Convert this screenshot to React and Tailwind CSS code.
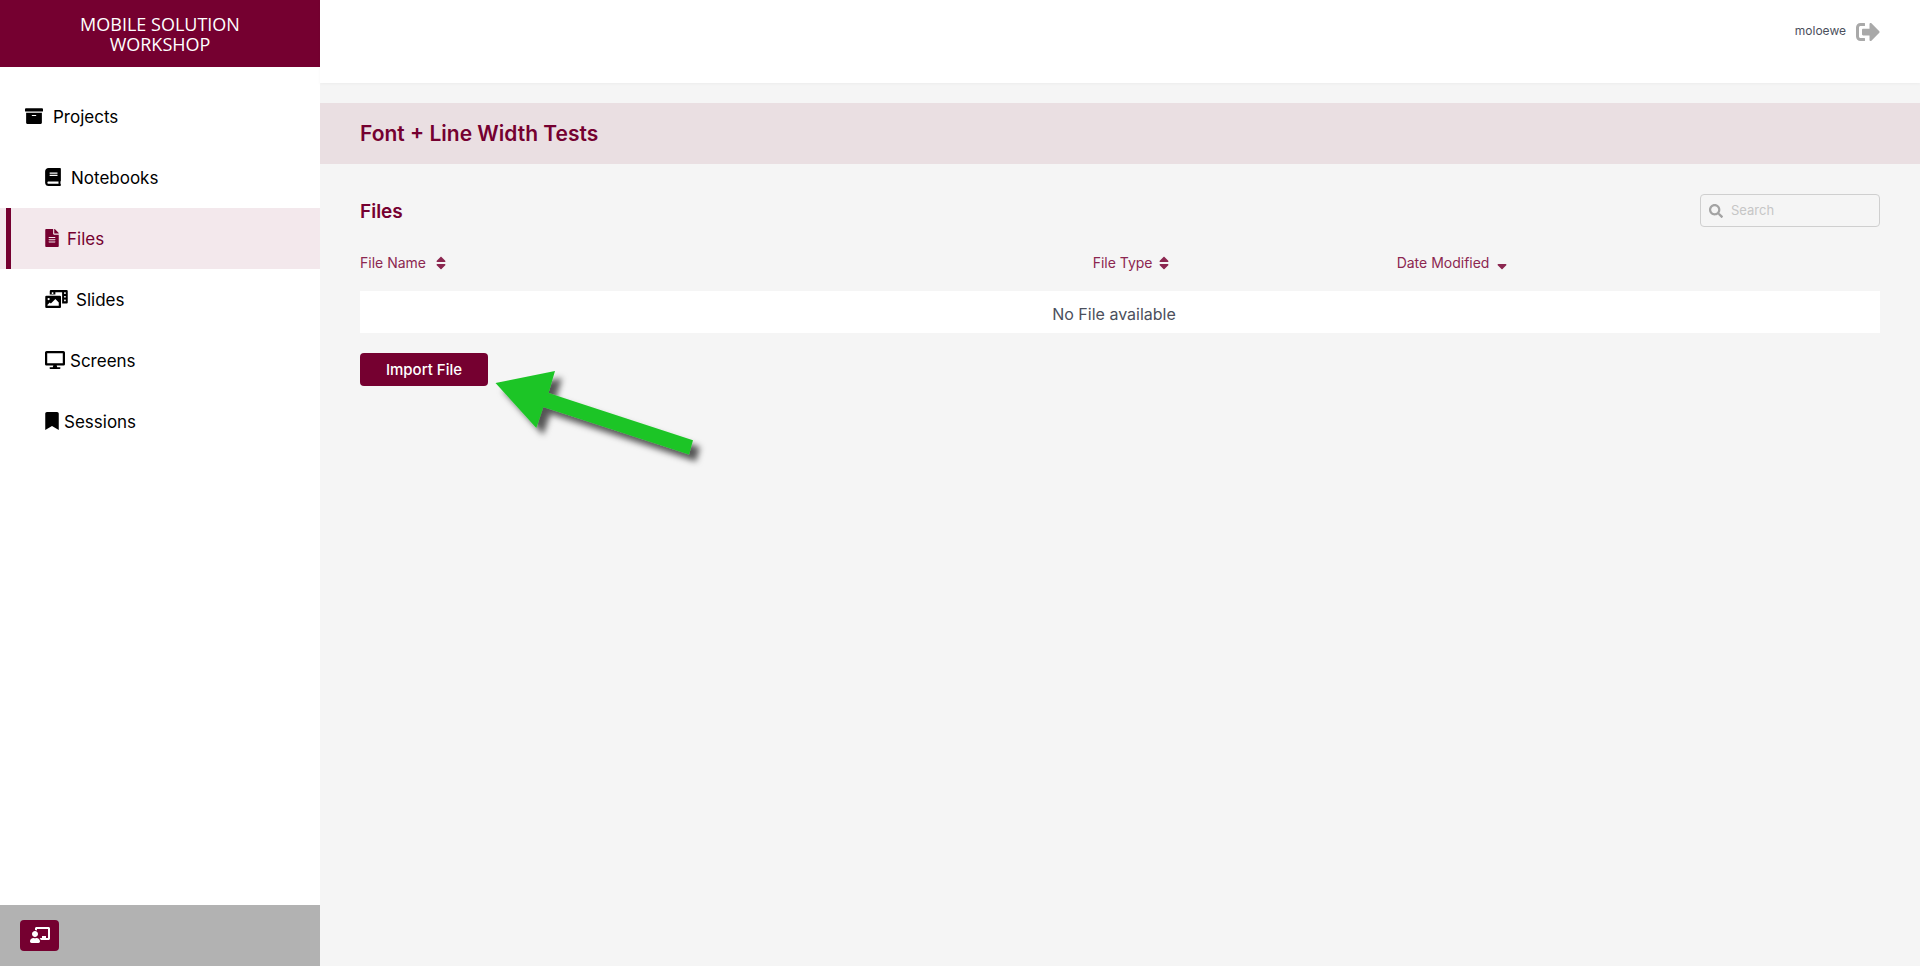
import {
  FaArchive,
  FaBook,
  FaBookmark,
  FaChalkboardTeacher,
  FaDesktop,
  FaFileAlt,
  FaPhotoVideo,
  FaSearch,
  FaSignOutAlt,
  FaSort,
  FaSortDown,
} from 'react-icons/fa';

const navItems = [
  { label: 'Projects', Icon: FaArchive, iconWidth: 'w-[18px]', spacing: 'pl-[25px] gap-2.5' },
  { label: 'Notebooks', Icon: FaBook, iconWidth: 'w-4', spacing: 'pl-[45px] gap-2.5' },
  { label: 'Files', Icon: FaFileAlt, iconWidth: 'w-3.5', spacing: 'pl-[45px] gap-2', active: true },
  { label: 'Slides', Icon: FaPhotoVideo, iconWidth: 'w-[23px]', spacing: 'pl-[45px] gap-2' },
  { label: 'Screens', Icon: FaDesktop, iconWidth: 'w-5', spacing: 'pl-[45px] gap-[5px]' },
  { label: 'Sessions', Icon: FaBookmark, iconWidth: 'w-3.5', spacing: 'pl-[45px] gap-[5px]' },
];

function NavItem({ label, Icon, iconWidth, spacing, active }) {
  return (
    <li>
      <a
        href="#"
        aria-current={active ? 'page' : undefined}
        className={`relative flex h-[61px] items-center text-[17px] ${spacing} ${
          active ? 'bg-[#f3e8ec] text-[#750030]' : 'text-black'
        }`}
      >
        {active && <span className="absolute inset-y-0 left-1.5 w-[5px] bg-[#750030]" />}
        <Icon className={`mb-0.5 h-[18px] shrink-0 ${iconWidth}`} />
        <span className="pt-0.5">{label}</span>
      </a>
    </li>
  );
}

function Sidebar() {
  return (
    <aside className="flex w-80 shrink-0 flex-col bg-white">
      <div className="bg-[#750030] px-16 pt-3.5 pb-[13px] text-center font-['Open_Sans',sans-serif] text-lg leading-5 text-white">
        MOBILE SOLUTION WORKSHOP
      </div>
      <nav className="flex-1 pt-[19px]">
        <ul>
          {navItems.map((item) => (
            <NavItem key={item.label} {...item} />
          ))}
        </ul>
      </nav>
      <div className="flex h-[61px] items-center bg-[#b2b2b2] px-5">
        <button
          type="button"
          aria-label="Present"
          className="flex h-[31px] w-[39px] items-center justify-center rounded bg-[#750030] pb-0.5 text-white"
        >
          <FaChalkboardTeacher className="h-4 w-5" />
        </button>
      </div>
    </aside>
  );
}

function ColumnHeader({ label, Icon, className, gap }) {
  return (
    <th scope="col" className={`pb-[18px] text-left font-normal ${className}`}>
      <button type="button" className={`flex items-center text-sm leading-5 text-[#8c2750] ${gap}`}>
        {label}
        <Icon className="h-4 w-2.5" />
      </button>
    </th>
  );
}

function PointerArrow() {
  return (
    <svg
      className="pointer-events-none absolute top-0 left-full h-[120px] w-[225px]"
      viewBox="0 0 225 120"
      aria-hidden="true"
    >
      <defs>
        <filter id="arrow-shadow" x="-10%" y="-10%" width="130%" height="140%">
          <feDropShadow dx="7" dy="7" stdDeviation="3" floodColor="#000" floodOpacity="0.65" />
        </filter>
      </defs>
      <path
        d="M7.5 30 L67 18 L60.5 40 L205 87.3 L201 101.5 L55.3 54 L48.3 75 Z"
        fill="#1ec528"
        filter="url(#arrow-shadow)"
      />
    </svg>
  );
}

export default function App() {
  return (
    <div className="flex min-h-screen bg-[#f5f5f5] font-['Inter',sans-serif]">
      <Sidebar />
      <div className="flex min-w-0 flex-1 flex-col">
        <header className="flex h-[83px] items-start justify-end gap-2.5 bg-white px-10 pt-5 shadow-[0_1px_3px_rgba(0,0,0,0.04)]">
          <span className="pt-0.5 text-xs leading-[18px] text-[#4b4f5c]">moloewe</span>
          <button type="button" aria-label="Sign out" className="text-[#a9a9a9]">
            <FaSignOutAlt className="size-6" />
          </button>
        </header>
        <h1 className="mt-5 bg-[#eadfe2] px-10 text-[21px] leading-[61px] font-semibold text-[#750030]">
          Font + Line Width Tests
        </h1>
        <main className="px-10 pt-[30px]">
          <div className="flex items-center justify-between">
            <h2 className="pt-0.5 text-[19px] leading-[31px] font-semibold text-[#750030]">
              Files
            </h2>
            <label className="flex h-[33px] w-[180px] items-center gap-2 rounded border border-[#cfcfcf] px-2">
              <FaSearch className="size-3.5 shrink-0 text-[#a3a3a3]" />
              <input
                type="search"
                aria-label="Search"
                placeholder="Search"
                className="w-full min-w-0 bg-transparent text-[13px] outline-none placeholder:text-[#c6c6c6]"
              />
            </label>
          </div>
          <table className="mt-[26px] w-full table-fixed border-collapse">
            <thead>
              <tr>
                <ColumnHeader label="File Name" Icon={FaSort} className="w-[48.2%]" gap="gap-2.5" />
                <ColumnHeader label="File Type" Icon={FaSort} className="w-[20%]" gap="gap-1.5" />
                <ColumnHeader label="Date Modified" Icon={FaSortDown} className="w-[31.8%]" gap="gap-2" />
              </tr>
            </thead>
            <tbody>
              <tr>
                <td
                  colSpan={3}
                  className="h-[42px] bg-white pt-1 pr-3 text-center text-base text-[#4b4f5c]"
                >
                  No File available
                </td>
              </tr>
            </tbody>
          </table>
          <div className="relative mt-5 w-fit">
            <button
              type="button"
              className="h-[33px] w-32 rounded bg-[#750030] pt-0.5 text-[15px] font-medium text-white"
            >
              Import File
            </button>
            <PointerArrow />
          </div>
        </main>
      </div>
    </div>
  );
}
